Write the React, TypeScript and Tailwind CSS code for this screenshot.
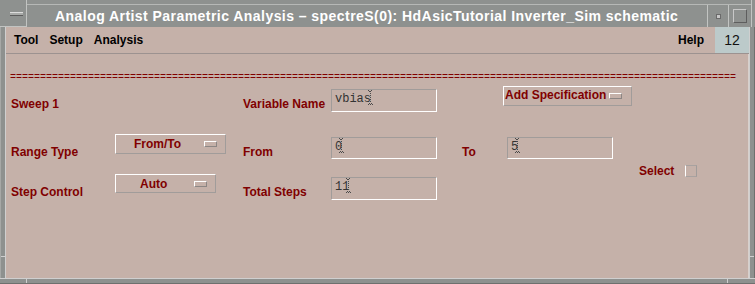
import React from "react";

function Indicator() {
  return (
    <span className="block w-[13px] h-[6px] border border-t-white border-l-white border-b-[#8c8684] border-r-[#8c8684]" />
  );
}

function Cursor() {
  const dots: [number, number][] = [
    [0, 0], [3, 0], [1, 1], [2, 1],
    [2, 3], [2, 5], [2, 7], [2, 9], [2, 11],
    [1, 13], [3, 13], [0, 14], [2, 14], [4, 14],
  ];
  return (
    <svg width="5" height="15" viewBox="0 0 5 15" className="block ml-[-3px] mt-[-2px] shrink-0">
      {dots.map(([x, y], i) => (
        <rect key={i} x={x} y={y} width="1" height="1" fill="#4a4a4a" />
      ))}
    </svg>
  );
}

function Field({ value, className }: { value: string; className: string }) {
  return (
    <div
      className={`flex items-start border border-t-[#a19c9a] border-l-[#a19c9a] border-b-white border-r-white pl-[3px] pt-[2px] ${className}`}
    >
      <span className="font-['Liberation_Mono',monospace] text-[12px] leading-[14px] text-[#333333] whitespace-pre">
        {value}
      </span>
      <Cursor />
    </div>
  );
}

function Label({ children, className }: { children: React.ReactNode; className: string }) {
  return (
    <div className={`text-[12px] leading-[14px] font-bold text-[#800000] whitespace-nowrap ${className}`}>
      {children}
    </div>
  );
}

export default function App() {
  return (
    <div className="w-[755px] h-[284px] flex flex-col bg-[#8e918f] font-['Liberation_Sans',Arial,sans-serif] overflow-hidden">
      {/* Title bar */}
      <div className="flex h-[27px] shrink-0">
        <div className="w-[27px] h-full border-r border-b border-[#c2c4c2] pl-[10px] pt-[12px]">
          <div className="w-[13px] h-[4px] bg-[#a8aaa8] border-t border-t-[#dcdcdc] border-b border-b-[#5c5c5c]" />
        </div>
        <div className="flex-1 flex flex-col">
          <div className="h-[5px] border-b border-[#b6b8b6]" />
          <div className="flex-1 flex items-center pl-[28px] text-white font-bold text-[14px] leading-[17px] tracking-[0.45px] whitespace-nowrap">
            Analog Artist Parametric Analysis – spectreS(0): HdAsicTutorial Inverter_Sim schematic
          </div>
        </div>
        <div className="w-[21px] flex flex-col">
          <div className="h-[5px] border-b border-[#b6b8b6]" />
          <div className="flex-1 border-l border-[#c2c4c2] flex items-center justify-center">
            <div className="w-[3px] h-[3px] bg-[#c8c8c8] outline outline-1 outline-[#6a6a6a]" />
          </div>
        </div>
        <div className="w-[23px] flex flex-col">
          <div className="h-[5px] border-b border-[#b6b8b6]" />
          <div className="flex-1 border-l border-[#c2c4c2] flex items-center pl-[4px]">
            <div className="w-[14px] h-[14px] border border-t-[#c8c8c8] border-l-[#c8c8c8] border-b-[#5e5e5e] border-r-[#5e5e5e]" />
          </div>
        </div>
        <div className="w-[4px] border-l border-[#c2c4c2]" />
      </div>

      {/* Middle */}
      <div className="flex h-[251px] shrink-0">
        <div className="w-[6px] flex flex-col border-l border-l-[#a6a8a6] border-r border-r-[#cfcfcf]">
          <div className="h-[230px] border-b border-[#cfcfcf]" />
        </div>
        <div className="flex-1 flex flex-col bg-[#c5b1a9]">
          {/* Menu bar */}
          <div className="h-[26px] flex items-center pl-[8px] text-[12px] leading-[14px] font-bold text-black">
            <span>Tool</span>
            <span className="ml-[11px]">Setup</span>
            <span className="ml-[11px]">Analysis</span>
            <span className="ml-auto mr-[11px]">Help</span>
            <div className="w-[34px] h-full bg-[#bccaca] flex items-center justify-center font-normal text-[14px] text-[#111]">
              12
            </div>
          </div>
          <div className="h-[1px] bg-[#9c9290]" />

          {/* Content */}
          <div className="flex-1 flex flex-col border-r border-[#d8d0cc]">
            <div className="mt-[18px] pl-[4px] h-[12px] overflow-hidden font-['Liberation_Mono',monospace] text-[10px] leading-[12px] text-[#800000] whitespace-nowrap">
              {"=".repeat(121)}
            </div>

            <div className="flex mt-[2px]">
              <div className="w-[627px] pl-[5px] flex flex-col">
                {/* Row A */}
                <div className="h-[48px] flex items-start">
                  <Label className="w-[232px] mt-[11px]">Sweep 1</Label>
                  <Label className="w-[88px] mt-[11px]">Variable Name</Label>
                  <Field value="vbias" className="w-[106px] h-[23px] mt-[3px]" />
                  <div className="ml-[66px] w-[129px] h-[20px] flex items-center border border-t-white border-l-white border-b-[#a19c9a] border-r-[#a19c9a] pl-[1px]">
                    <span className="self-start pt-[1px] text-[12px] leading-[14px] font-bold text-[#800000] whitespace-nowrap">
                      Add Specification
                    </span>
                    <span className="ml-[3px]">
                      <Indicator />
                    </span>
                  </div>
                </div>

                {/* Row B */}
                <div className="h-[40px] flex items-start">
                  <Label className="w-[104px] mt-[11px]">Range Type</Label>
                  <div className="w-[111px] h-[20px] flex items-center justify-between border border-t-white border-l-white border-b-[#a19c9a] border-r-[#a19c9a] pl-[18px] pr-[8px]">
                    <span className="self-start pt-[2px] text-[12px] leading-[14px] font-bold text-[#800000]">From/To</span>
                    <Indicator />
                  </div>
                  <Label className="ml-[17px] w-[88px] mt-[11px]">From</Label>
                  <Field value="0" className="w-[106px] h-[22px] mt-[3px]" />
                  <Label className="ml-[25px] w-[45px] mt-[11px]">To</Label>
                  <Field value="5" className="w-[106px] h-[22px] mt-[3px]" />
                </div>

                {/* Row C */}
                <div className="h-[30px] flex items-start">
                  <Label className="w-[104px] mt-[11px]">Step Control</Label>
                  <div className="w-[101px] h-[19px] flex items-center justify-between border border-t-white border-l-white border-b-[#a19c9a] border-r-[#a19c9a] pl-[24px] pr-[8px]">
                    <span className="self-start pt-[2px] text-[12px] leading-[14px] font-bold text-[#800000]">Auto</span>
                    <Indicator />
                  </div>
                  <Label className="ml-[27px] w-[88px] mt-[11px]">Total Steps</Label>
                  <Field value="11" className="w-[106px] h-[23px] mt-[3px]" />
                </div>
              </div>

              <div className="ml-[6px] mt-[78px] flex items-start gap-[11px]">
                <Label className="">Select</Label>
                <div className="mt-[1px] w-[12px] h-[12px] border border-l-white border-t-[#a8a2a0] border-r-[#a19c9a] border-b-[#a8a2a0]" />
              </div>
            </div>
          </div>
        </div>
        <div className="w-[6px] flex flex-col border-l border-l-[#cfcfcf] border-r border-r-[#6e706e]">
          <div className="h-[230px] border-b border-[#cfcfcf]" />
        </div>
      </div>

      {/* Bottom frame */}
      <div className="flex-1 flex border-t border-[#cfcfcf] border-b border-b-[#6e706e]">
        <div className="w-[27px] border-r border-[#cfcfcf]" />
        <div className="w-[701px] border-r border-[#cfcfcf]" />
      </div>
    </div>
  );
}
